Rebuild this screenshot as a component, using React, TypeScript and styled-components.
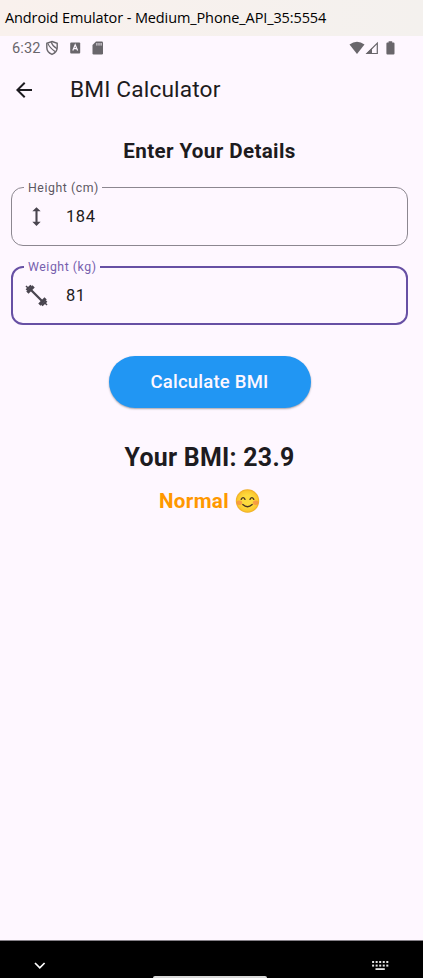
import React from "react";
import styled, { createGlobalStyle } from "styled-components";

const GlobalStyle = createGlobalStyle`
  * { box-sizing: border-box; }
  html, body { margin: 0; background: #fef7ff; overflow: hidden; }
  svg { display: block; flex: none; }
`;

const Screen = styled.div`
  width: 423px;
  height: 978px;
  display: flex;
  flex-direction: column;
  overflow: hidden;
  background: #fef7ff;
  color: #1d1b20;
  font-family: Roboto, sans-serif;
`;

const TitleBar = styled.header`
  height: 36px;
  flex: none;
  padding-left: 5px;
  line-height: 35px;
  background: linear-gradient(90deg, #f9f1ed, #f4f1ee);
  color: #000;
  font-family: "Open Sans", "Noto Sans", sans-serif;
  font-size: 14.5px;
  letter-spacing: -0.11px;
  white-space: nowrap;
`;

const StatusBar = styled.div`
  height: 24px;
  flex: none;
  display: flex;
  align-items: center;
  justify-content: space-between;
  padding: 0 28px 0 12px;
  color: #69666b;
`;

const StatusGroup = styled.div`
  display: flex;
  align-items: center;
`;

const Clock = styled.span`
  width: 33px;
  font-size: 14.6px;
  letter-spacing: 0.1px;
`;

const AppBar = styled.div`
  height: 60px;
  flex: none;
  display: flex;
  align-items: center;
  padding-left: 12px;
  gap: 34px;
`;

const AppTitle = styled.h1`
  margin: 0;
  font-size: 22.7px;
  font-weight: 400;
  letter-spacing: 0.15px;
  line-height: 30px;
`;

const Content = styled.main`
  flex: 1;
  display: flex;
  flex-direction: column;
  align-items: center;
  padding: 18px 15px 0 11px;
`;

const Heading = styled.h2`
  margin: 0 0 22px;
  font-size: 20.6px;
  line-height: 27px;
  font-weight: 700;
  letter-spacing: 0.37px;
`;

const Field = styled.label<{ $focused?: boolean }>`
  position: relative;
  width: 397px;
  height: 59px;
  flex: none;
  display: flex;
  align-items: center;
  gap: 17px;
  padding-left: ${(p) => (p.$focused ? 11 : 12)}px;
  border: ${(p) => (p.$focused ? "2px solid #6750a4" : "1px solid #8c8790")};
  border-radius: 12px;
  & + & { margin-top: 20px; }
`;

const FieldLabel = styled.span<{ $focused?: boolean }>`
  position: absolute;
  top: ${(p) => (p.$focused ? -9 : -8)}px;
  left: ${(p) => (p.$focused ? 11 : 12)}px;
  padding: 0 3px 0 4px;
  background: #fef7ff;
  color: ${(p) => (p.$focused ? "#7660ae" : "#5c5862")};
  font-size: 12.3px;
  line-height: 16px;
  letter-spacing: 0.55px;
  white-space: nowrap;
`;

const FieldValue = styled.span`
  font-size: 16.5px;
  line-height: 24px;
  letter-spacing: 0.6px;
`;

const PrimaryButton = styled.button`
  width: 202px;
  height: 52px;
  flex: none;
  margin: 31px 0 0;
  padding: 0;
  border: 0;
  border-radius: 26px;
  background: #2196f3;
  box-shadow: 0 1px 2px rgba(0, 0, 0, 0.35);
  color: #fef7ff;
  font-family: inherit;
  font-size: 18.5px;
  font-weight: 500;
  letter-spacing: 0.22px;
`;

const Result = styled.p`
  margin: 33px 0 0;
  font-size: 24.9px;
  line-height: 34px;
  font-weight: 700;
  letter-spacing: 0.27px;
`;

const Category = styled.p`
  display: flex;
  align-items: center;
  gap: 6px;
  margin: 13px 0 0;
  color: #ff9800;
  font-size: 20.6px;
  line-height: 26px;
  font-weight: 700;
  letter-spacing: 0.35px;
`;

const NavBar = styled.nav`
  height: 38px;
  flex: none;
  display: grid;
  grid-template-columns: 153px 114px 1fr;
  background: #000;
  border-top: 1px solid #858087;
`;

const NavSlot = styled.div<{ $end?: boolean }>`
  display: flex;
  justify-content: ${(p) => (p.$end ? "flex-end" : "flex-start")};
  padding: ${(p) => (p.$end ? "19px 34px 0 0" : "20px 0 0 34px")};
`;

const HomeHandle = styled.div`
  align-self: end;
  height: 2px;
  background: #d9d9d9;
  border-radius: 2px 2px 0 0;
`;

const ShieldIcon = () => (
  <svg width="14" height="16" viewBox="0 0 14 16" fill="none" stroke="currentColor" strokeWidth="1.4">
    <path d="M7 1.5 12.2 3.3V7.5C12.2 10.8 10.1 13.1 7 14.4 3.9 13.1 1.8 10.8 1.8 7.5V3.3Z" />
    <path d="M3 3.6Q4.5 7.5 10.3 11.8" strokeWidth="1.2" />
    <path d="M6.2 2.2Q7.4 5.8 12 8.8" strokeWidth="1.2" />
  </svg>
);

const KeyboardLayoutIcon = () => (
  <svg width="11" height="12" viewBox="0 0 11 12">
    <rect x="0.2" y="0.6" width="10" height="10.8" rx="1" fill="currentColor" />
    <path d="M2.8 8.4 5.2 2.8 7.6 8.4M3.7 6.6H6.7" fill="none" stroke="#fef7ff" strokeWidth="1.2" />
  </svg>
);

const SdCardIcon = () => (
  <svg width="12" height="14" viewBox="0 0 12 14">
    <path d="M4 .5H9.8Q11 .5 11 1.7V12.3Q11 13.5 9.8 13.5H1.7Q.5 13.5.5 12.3V4Z" fill="currentColor" />
    <path d="M4.9 2V4.6M7 2V4.6M9.1 2V4.6" stroke="#fef7ff" strokeWidth="0.9" />
  </svg>
);

const WifiIcon = () => (
  <svg width="16" height="14" viewBox="0 0 16 14">
    <path d="M.5 3.5Q8-2 15.5 3.5L8 13Z" fill="currentColor" />
  </svg>
);

const SignalIcon = () => (
  <svg width="14" height="14" viewBox="0 0 14 14">
    <path d="M12.3 2.2V12.5H2Z" fill="none" stroke="currentColor" strokeWidth="1.2" />
    <path d="M1 13 7 7V13Z" fill="currentColor" />
  </svg>
);

const BatteryIcon = () => (
  <svg width="9" height="14" viewBox="0 0 9 14">
    <path d="M2.6.3H6.2V1.5H7.5Q8.5 1.5 8.5 2.5V12.5Q8.5 13.5 7.5 13.5H1.4Q.4 13.5.4 12.5V2.5Q.4 1.5 1.4 1.5H2.6Z" fill="currentColor" />
  </svg>
);

const BackIcon = () => (
  <svg width="24" height="24" viewBox="0 0 24 24">
    <path d="M20 11H7.83l5.59-5.59L12 4l-8 8 8 8 1.41-1.41L7.83 13H20z" fill="currentColor" />
  </svg>
);

const HeightIcon = () => (
  <svg width="25" height="25" viewBox="0 0 24 24" fill="#49454f">
    <path d="M13 6.99h3L12 3 8 6.99h3v10.02H8L12 21l4-3.99h-3z" />
  </svg>
);

const DumbbellIcon = () => (
  <svg width="25" height="25" viewBox="0 0 25 25" fill="none" stroke="#49454f">
    <path d="M6 6 19 19" strokeWidth="2.3" />
    <path d="M3.4 9.6 9.6 3.4M15.4 21.6 21.6 15.4" strokeWidth="3.2" />
    <path d="M2.5 7.2 7.2 2.5M17.8 22.5 22.5 17.8" strokeWidth="2.4" />
    <path d="M2 3 4 5M21 20 23 22" strokeWidth="1.5" />
  </svg>
);

const SmileIcon = () => (
  <svg width="25" height="25" viewBox="0 0 25 25" role="img" aria-label="😊">
    <defs>
      <radialGradient id="face">
        <stop offset="0.5" stopColor="#fddb3e" />
        <stop offset="0.85" stopColor="#fbc82f" />
        <stop offset="1" stopColor="#eeaa22" />
      </radialGradient>
    </defs>
    <circle cx="12.5" cy="12" r="11.7" fill="url(#face)" />
    <ellipse cx="4.4" cy="13.8" rx="2.8" ry="2.2" fill="#f47b4b" opacity="0.6" />
    <ellipse cx="20.6" cy="13.8" rx="2.8" ry="2.2" fill="#f47b4b" opacity="0.6" />
    <g fill="none" stroke="#493421" strokeWidth="1.4" strokeLinecap="round">
      <path d="M6.2 10.3Q8.1 6.9 10 10.3M15 10.3Q16.9 6.9 18.8 10.3" />
      <path d="M7.8 15.6Q12.5 19.8 17.2 15.6" />
    </g>
  </svg>
);

const ChevronIcon = () => (
  <svg width="12" height="9" viewBox="0 0 12 9">
    <path d="M1 2 5.8 6.8 10.6 2" fill="none" stroke="#fff" strokeWidth="1.7" />
  </svg>
);

const KeyboardIcon = () => (
  <svg width="17" height="11" viewBox="0 0 17 11" fill="#e5e5e5">
    {[0, 1].map((row) =>
      [0, 1, 2, 3, 4].map((col) => (
        <rect key={`${row}-${col}`} x={0.1 + col * 3.55} y={1 + row * 3.6} width="2" height="2" />
      ))
    )}
    <rect x="3.5" y="8.2" width="9.3" height="1.8" />
  </svg>
);

const ShieldSlot = styled.div`
  display: flex;
  align-items: center;
  margin-right: 11px;
`;

const SdSlot = styled.div`
  margin-left: 11px;
`;

const BatterySlot = styled.div`
  margin-left: 7px;
`;

export default function App() {
  return (
    <Screen>
      <GlobalStyle />
      <TitleBar>Android Emulator - Medium_Phone_API_35:5554</TitleBar>
      <StatusBar>
        <StatusGroup>
          <Clock>6:32</Clock>
          <ShieldSlot><ShieldIcon /></ShieldSlot>
          <KeyboardLayoutIcon />
          <SdSlot><SdCardIcon /></SdSlot>
        </StatusGroup>
        <StatusGroup>
          <WifiIcon />
          <SignalIcon />
          <BatterySlot><BatteryIcon /></BatterySlot>
        </StatusGroup>
      </StatusBar>
      <AppBar>
        <BackIcon />
        <AppTitle>BMI Calculator</AppTitle>
      </AppBar>
      <Content>
        <Heading>Enter Your Details</Heading>
        <Field>
          <FieldLabel>Height (cm)</FieldLabel>
          <HeightIcon />
          <FieldValue>184</FieldValue>
        </Field>
        <Field $focused>
          <FieldLabel $focused>Weight (kg)</FieldLabel>
          <DumbbellIcon />
          <FieldValue>81</FieldValue>
        </Field>
        <PrimaryButton>Calculate BMI</PrimaryButton>
        <Result>Your BMI: 23.9</Result>
        <Category>
          Normal
          <SmileIcon />
        </Category>
      </Content>
      <NavBar>
        <NavSlot><ChevronIcon /></NavSlot>
        <HomeHandle />
        <NavSlot $end><KeyboardIcon /></NavSlot>
      </NavBar>
    </Screen>
  );
}
